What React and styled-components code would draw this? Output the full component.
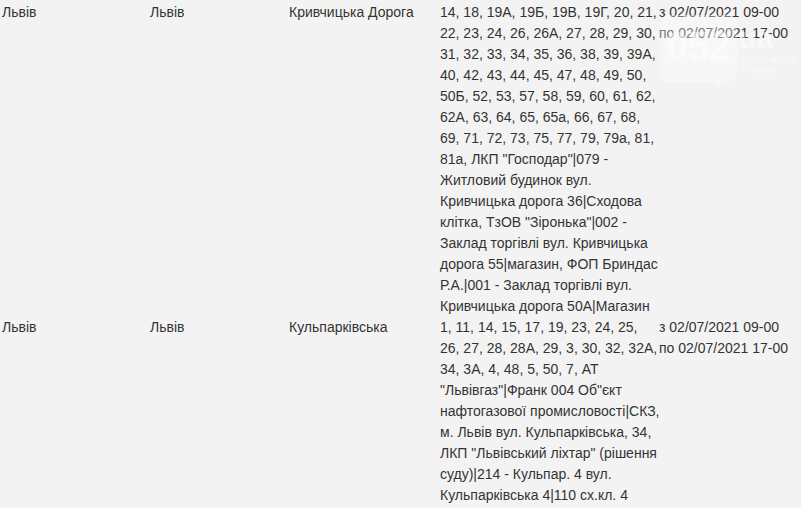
import React from 'react';
import styled, { createGlobalStyle } from 'styled-components';

const GlobalStyle = createGlobalStyle`
  html, body {
    margin: 0;
    padding: 0;
    background: #f3f3f3;
  }
  body {
    font-family: 'Liberation Sans', Arial, sans-serif;
    font-size: 14px;
    color: #333;
    overflow: hidden;
  }
`;

// \u2060 keeps "…|Next" together the way the source page wraps it
const rows = [
  {
    region: 'Львів',
    city: 'Львів',
    street: 'Кривчицька Дорога',
    houses:
      '14, 18, 19А, 19Б, 19В, 19Г, 20, 21, 22, 23, 24, 26, 26А, 27, 28, 29, 30, 31, 32, 33, 34, 35, 36, 38, 39, 39А, 40, 42, 43, 44, 45, 47, 48, 49, 50, 50Б, 52, 53, 57, 58, 59, 60, 61, 62, 62А, 63, 64, 65, 65а, 66, 67, 68, 69, 71, 72, 73, 75, 77, 79, 79а, 81, 81а, ЛКП "Господар"|079 - Житловий будинок вул. Кривчицька дорога 36|\u2060Сходова клітка, ТзОВ "Зіронька"|\u2060002 - Заклад торгівлі вул. Кривчицька дорога 55|\u2060магазин, ФОП Бриндас Р.А.|\u2060001 - Заклад торгівлі вул. Кривчицька дорога 50А|\u2060Магазин',
    from: 'з 02/07/2021 09-00',
    to: 'по 02/07/2021 17-00',
  },
  {
    region: 'Львів',
    city: 'Львів',
    street: 'Кульпарківська',
    houses:
      '1, 11, 14, 15, 17, 19, 23, 24, 25, 26, 27, 28, 28А, 29, 3, 30, 32, 32А, 34, 3А, 4, 48, 5, 50, 7, АТ "Львівгаз"|\u2060Франк 004 Об"єкт нафтогазової промисловості|\u2060СКЗ, м. Львів вул. Кульпарківська, 34, ЛКП "Львівський ліхтар" (рішення суду)|\u2060214 - Кульпар. 4 вул. Кульпарківська 4|\u2060110 сх.кл. 4 вул.\u00a0Кульпарківська 4',
    from: 'з 02/07/2021 09-00',
    to: 'по 02/07/2021 17-00',
  },
];

const Page = styled.div`
  position: relative;
  padding: 2px 0 0 2px;
`;

const Row = styled.div`
  display: grid;
  grid-template-columns: 148px 139px 151px 219px 1fr;
  line-height: 21px;
`;

const Cell = styled.div`
  white-space: normal;
`;

const Houses = styled.div`
  width: 220px;
  position: relative;
  z-index: 1;
`;

const Period = styled.div`
  white-space: nowrap;
`;

const Watermark = styled.svg`
  position: absolute;
  top: 10px;
  left: 655px;
  pointer-events: none;
  font-family: 'Liberation Sans', Arial, sans-serif;
`;

export default function App() {
  return (
    <Page>
      <GlobalStyle />
      {rows.map((r, i) => (
        <Row key={i}>
          <Cell>{r.region}</Cell>
          <Cell>{r.city}</Cell>
          <Cell>{r.street}</Cell>
          <Houses>{r.houses}</Houses>
          <Period>
            {r.from}
            <br />
            {r.to}
          </Period>
        </Row>
      ))}
      <Watermark width="146" height="80" viewBox="0 0 146 80">
        <path
          d="M15 5 H72 Q82 5 82 15 V62 Q82 72 72 72 H68 L62 78 L58 72 H15 Q5 72 5 62 V15 Q5 5 15 5 Z"
          fill="rgba(255,255,255,0.35)"
        />
        <text x="11" y="50" fontSize="40" fontWeight="700" fill="rgba(255,255,255,0.5)" letterSpacing="-1">
          052
        </text>
        <text x="84" y="38" fontSize="29" fontWeight="700" fill="rgba(255,255,255,0.5)">
          ua
        </text>
        <text x="87" y="53" fontSize="10.5" fill="rgba(255,255,255,0.55)">
          Сайт міста
        </text>
        <text x="87" y="63" fontSize="10.5" fill="rgba(255,255,255,0.55)">
          Львова
        </text>
      </Watermark>
    </Page>
  );
}
